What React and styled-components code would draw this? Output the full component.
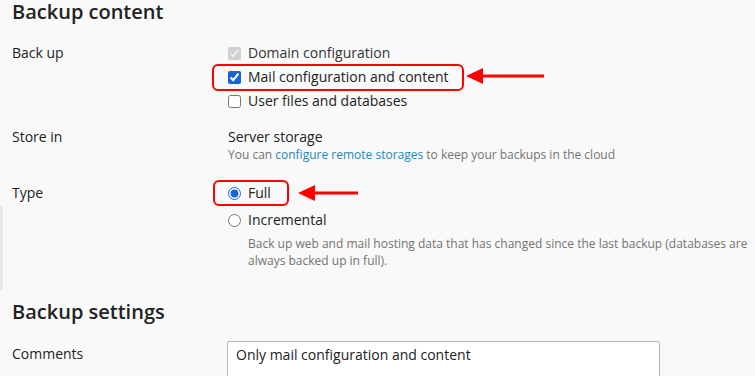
import React from 'react';
import styled, { createGlobalStyle } from 'styled-components';

const GlobalStyle = createGlobalStyle`
  html, body {
    margin: 0;
    background: #f9f9f9;
    font-family: "Open Sans", "Liberation Sans", sans-serif;
    color: #222;
  }
`;

const Arrow = ({ length, top, left }) => (
    <ArrowSvg width={length} height={16} viewBox={`0 0 ${length} 16`} $top={top} $left={left}>
        <polygon points="0,8 17,0 17,16" fill="#f00" />
        <rect x="15" y="6.5" width={length - 15} height="3" fill="#f00" />
    </ArrowSvg>
);

const App = () => {
    return (
        <Page>
            <GlobalStyle />
            <SideTab />
            <SectionTitle>Backup content</SectionTitle>

            <Row $gap={14}>
                <Label $lh={24}>Back up</Label>
                <Field>
                    <Option>
                        <input type="checkbox" checked disabled readOnly />
                        <OptionText $muted>Domain configuration</OptionText>
                    </Option>
                    <Option>
                        <Marked $l={16} $r={15} $t={-1} $b={-2}>
                            <input type="checkbox" checked readOnly />
                            <OptionText>Mail configuration and content</OptionText>
                            <Arrow length={78} top={3} left={17} />
                        </Marked>
                    </Option>
                    <Option>
                        <input type="checkbox" readOnly />
                        <OptionText>User files and databases</OptionText>
                    </Option>
                </Field>
            </Row>

            <Row $gap={18}>
                <Label $lh={20}>Store in</Label>
                <Field>
                    <Value>Server storage</Value>
                    <Hint>You can <Link href="#">configure remote storages</Link> to keep your backups in the cloud</Hint>
                </Field>
            </Row>

            <Row $gap={31}>
                <Label $lh={24}>Type</Label>
                <Field>
                    <Option>
                        <Marked $l={15} $r={18} $t={-1} $b={-1}>
                            <input type="radio" name="type" checked readOnly />
                            <OptionText>Full</OptionText>
                            <Arrow length={60} top={4} left={27} />
                        </Marked>
                    </Option>
                    <Option $space={3}>
                        <input type="radio" name="type" readOnly />
                        <OptionText>Incremental</OptionText>
                    </Option>
                    <Description>
                        Back up web and mail hosting data that has changed since the last backup (databases are always backed up in full).
                    </Description>
                </Field>
            </Row>

            <SectionTitle>Backup settings</SectionTitle>

            <Row>
                <Label $lh={20} $pad={3}>Comments</Label>
                <Field>
                    <Comments defaultValue="Only mail configuration and content" />
                </Field>
            </Row>
        </Page>
    );
};

export default App;

const Page = styled.div`
    position: relative;
    height: 376px;
    overflow: hidden;
    padding: 0 4px 0 12px;
    box-sizing: border-box;
`;

const SideTab = styled.div`
    position: absolute;
    left: 0;
    top: 205px;
    width: 3px;
    height: 86px;
    background: #e8e8e8;
    border-radius: 0 3px 3px 0;
`;

const SectionTitle = styled.h2`
    margin: 0 0 17px;
    font-size: 20px;
    font-weight: 600;
    line-height: 24px;
    color: #222;
`;

const Row = styled.div`
    display: grid;
    grid-template-columns: 216px 1fr;
    align-items: start;
    margin-bottom: ${props => props.$gap || 0}px;
`;

const Label = styled.div`
    font-size: 14px;
    line-height: ${props => props.$lh}px;
    padding-top: ${props => props.$pad || 0}px;
    color: #222;
`;

const Field = styled.div`
    display: flex;
    flex-direction: column;
    align-items: flex-start;
`;

const Option = styled.label`
    display: flex;
    align-items: center;
    height: 24px;
    margin-top: ${props => props.$space || 0}px;
    font-size: 14px;

    input {
        margin: 0;
        width: 13px;
        height: 13px;
        accent-color: #1565d8;
    }
`;

const Marked = styled.span`
    position: relative;
    display: inline-flex;
    align-items: center;
    height: 24px;

    &::before {
        content: "";
        position: absolute;
        left: -${props => props.$l}px;
        right: -${props => props.$r}px;
        top: ${props => props.$t}px;
        bottom: ${props => props.$b}px;
        border: 2px solid #f00;
        border-radius: 6px;
        pointer-events: none;
    }
`;

const ArrowSvg = styled.svg`
    position: absolute;
    top: ${props => props.$top}px;
    left: calc(100% + ${props => props.$left}px);
`;

const OptionText = styled.span`
    margin-left: 7px;
    line-height: 24px;
    color: ${props => props.$muted ? '#333' : '#222'};
`;

const Value = styled.div`
    font-size: 14px;
    line-height: 20px;
`;

const Hint = styled.div`
    font-size: 12px;
    line-height: 16px;
    color: #737373;
`;

const Link = styled.a`
    color: #1f86bd;
    text-decoration: none;
`;

const Description = styled.div`
    margin: 3px 0 0 20px;
    font-size: 12px;
    line-height: 17px;
    color: #737373;
`;

const Comments = styled.textarea`
    margin-left: -1px;
    width: 433px;
    height: 70px;
    box-sizing: border-box;
    padding: 3px 8px;
    border: 1px solid #b5b5b5;
    border-radius: 2px;
    background: #fff;
    font-family: "Open Sans", sans-serif;
    font-size: 14px;
    line-height: 20px;
    color: #222;
    resize: none;
    outline: none;
`;
